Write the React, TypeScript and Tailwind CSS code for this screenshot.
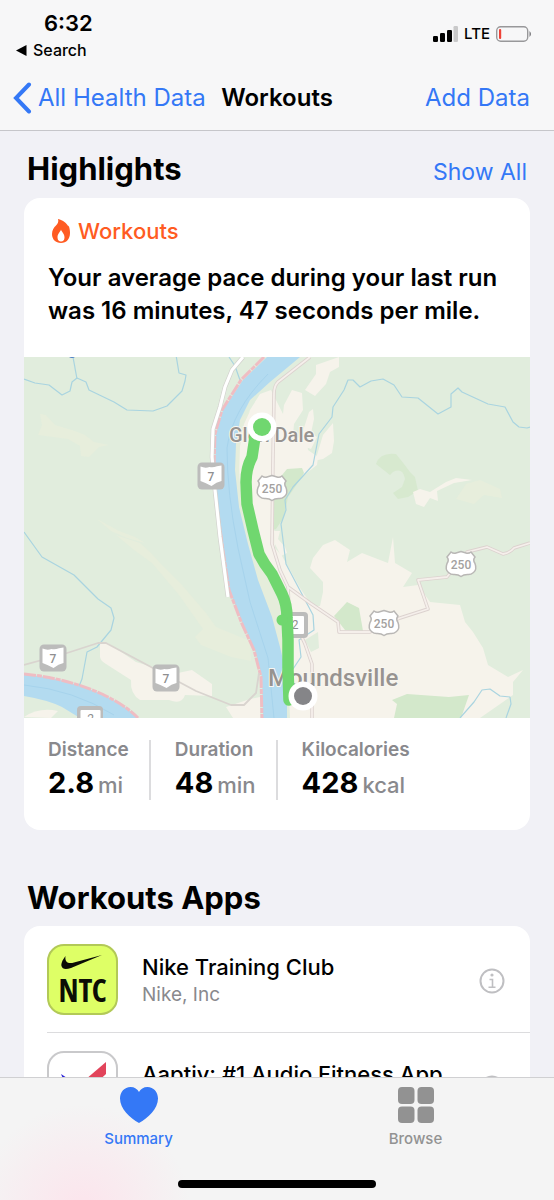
import React, { useState } from 'react';

interface Stat {
  label: string;
  value: string;
  unit: string;
}

interface WorkoutApp {
  name: string;
  vendor: string;
  icon: React.FC;
}

type TabId = 'summary' | 'browse';

const stats: Stat[] = [
  { label: 'Distance', value: '2.8', unit: 'mi' },
  { label: 'Duration', value: '48', unit: 'min' },
  { label: 'Kilocalories', value: '428', unit: 'kcal' },
];

const StatusBar: React.FC = () => (
  <div className="flex items-start justify-between pt-2 pr-[22px] pl-4">
    <div className="flex flex-col">
      <span className="pl-7 text-[22px] leading-[30px] font-semibold">6:32</span>
      <button className="flex items-center gap-1.5 text-base leading-6 font-medium">
        <svg viewBox="0 0 11 11" className="h-[11px] w-[11px]" aria-hidden="true">
          <path d="M0 5.5 10.5 0v11z" />
        </svg>
        Search
      </button>
    </div>
    <div className="flex items-center gap-1.5 pt-4">
      <svg viewBox="0 0 25 16" className="h-4 w-[25px]" aria-hidden="true">
        <rect x="0" y="10" width="5" height="6" rx="1.2" />
        <rect x="7" y="7" width="5" height="9" rx="1.2" />
        <rect x="14" y="4" width="5" height="12" rx="1.2" />
        <rect x="20.500" y="0" width="4.500" height="16" rx="1.2" fill="#c9c9ca" />
      </svg>
      <span className="text-[15px] leading-5 font-medium">LTE</span>
      <svg viewBox="0 0 36 16" className="h-4 w-9" aria-hidden="true">
        <rect x="0.700" y="0.700" width="31" height="14.600" rx="4" fill="none" stroke="#98989a" strokeWidth="1.400" />
        <rect x="3" y="3" width="2.200" height="10" rx="1" fill="#ee4237" />
        <path d="M33.500 5q3 3 0 6z" fill="#77777a" />
      </svg>
    </div>
  </div>
);

const NavBar: React.FC = () => (
  <nav className="grid grid-cols-[1fr_auto_1fr] items-center px-6 pt-[18px] pb-3.5 text-2xl leading-9">
    <button className="-ml-3 flex items-center gap-1.5 whitespace-nowrap text-[#3478f6]">
      <svg viewBox="0 0 20 32" className="h-8 w-5" fill="none" stroke="currentColor" strokeWidth="4" aria-hidden="true">
        <path d="M17 2.500 4 16l13 13.500" strokeLinecap="round" />
      </svg>
      All Health Data
    </button>
    <h1 className="font-semibold">Workouts</h1>
    <button className="justify-self-end text-[#3478f6]">Add Data</button>
  </nav>
);

const FlameIcon: React.FC = () => (
  <svg viewBox="0 0 18 24" className="h-6 w-[18px]" aria-hidden="true">
    <path
      d="M6 0c5 1 9 4.500 10.300 7.500.3-.5.2-1.200.2-1.200C17.500 8.500 18 11.500 18 14c0 6-3.500 10-9 10s-9-3.800-9-9c0-4 2-6.500 4-8.500C5.500 5 7 3 6 0z"
      fill="#ff5b22"
    />
    <path d="M9 10.500c.2 2 3.500 4 3.500 8 0 2.500-1.500 4-3.500 4s-3.500-1.500-3.500-4c0-4 3.300-6 3.500-8z" fill="#fff" />
  </svg>
);

interface ShieldProps {
  x: number;
  y: number;
  text: string;
}

// Ohio state route marker
const StateShield: React.FC<ShieldProps> = ({ x, y, text }) => (
  <g transform={`translate(${x} ${y})`}>
    <rect x="-13.500" y="-13.500" width="27" height="27" rx="4.500" fill="#bcbcbb" />
    <path d="M-10.500-9.500q4.500 2 9 .5 3.500 1 7.500-.8l4.500-.7V5q-5 1-10 5-5.500-3-11-5z" fill="#fff" />
    <text y="4.500" textAnchor="middle" fontSize="12" fontWeight="500" fill="#8f8f90">{text}</text>
  </g>
);

// US highway marker
const HighwayShield: React.FC<ShieldProps> = ({ x, y, text }) => (
  <g transform={`translate(${x} ${y})`}>
    <path
      d="M-10-12q2.500 2 5 1 2.500-.8 5-1.500 2.500.7 5 1.500 2.500 1 5-1l4 5q-2.500 3 0 6.500 2.200 6-1.500 9Q9.500 11 6.500 10.500 2.500 10.500 0 12.500q-2.500-2-6.500-2-3 .5-6-2-3.700-3-1.500-9 2.500-3.500 0-6.500z"
      fill="#fff"
      stroke="#b9b7b5"
      strokeWidth="1.500"
    />
    <text y="4.500" textAnchor="middle" fontSize="12" fontWeight="500" fill="#a3a1a0">{text}</text>
  </g>
);

const RouteMap: React.FC = () => (
  <svg viewBox="24 357 506 361" className="block h-auto w-full" fontFamily="Roboto, sans-serif" role="img" aria-label="Route of the last run">
    <rect x="24" y="357" width="506" height="361" fill="#e1eddd" />

    {/* fields and clearings */}
    <g fill="#e7eedc">
      <path d="M40 414l6 1 9 10 20 6 10 4 9 7 15 3-10 2-4 4-6 6-8-1-1-10-12-7-30-4 4-10z" />
      <path d="M97 519l22 12 16 6 10 6-18-5-16-7z" />
      <path d="M116 535l24 8q12 10 20 20l22 22 24 28 10 14 34 14 1 20-20-4-30-12-6-8 8-8-24-34-27-32-18-13z" />
      <path d="M466 484l14-4 20 9 2 9-18-3-10 9-18-5z" />
    </g>
    <path d="M376 464q4-12 20-10l8 10 6 8 5 5 3 14-10 6-10 2-5-6 9-6 3-8q-2-12-12-7l-3 3z" fill="#d7e9cf" />

    {/* built up land */}
    <g fill="#f6f3eb">
      <path d="M271 390 260 394 250 410 243 424 238 446 240 490 250 532 262 562 276 590 286 620 290 718 480 718 503 702 513 695 513 682 523 670 508 677 488 665 483 648 473 632 465 622 460 605 430 602 418 585 403 587 412 573 395 563 393 537 388 563 380 560 362 553 347 562 350 550 335 540 323 545 313 558 310 568 323 582 323 592 320 606 316 606 308 600 300 588 290 570 282 556 275 548 273 500 276 480 290 472 301 468 303 476 317 465 318 457 308 450 307 442 293 436 294 424 303 410 302 393 292 390 284 405 283 414 276 400z" />
      <path d="M316 365l23-8 0 10-9 5-4 12-11 12-10-6 11-16z" />
      <path d="M309 412l4-3 1 10-3 14 6 4-6 12-16-6 8-12z" />
      <path d="M333 423l1 18-2 12-9 6-10 2 4-6 6-20z" />
      <path d="M413 492l7-3 10 3 16-10 10-4 16 2-18 3-17 8 1 10-8-3-6 9-8-3z" />
      <path d="M100 643h8l28 19 20 6q8 12 22 5l14-3 20 14v12l-27-1q-3 10-16 5l-29 0q-10-6-9-20l-25-16q-7-4-6-9z" />
      <path d="M226 707l24-8 10-2v21h-27z" />
      <path d="M24 717q15-10 34-6l-7 7z" />
      <path d="M274 531h6l-2 8 7 8 2 6-6 3-6-12z" />
    </g>

    {/* parks */}
    <g fill="#d3e8cb">
      <path d="M273 498l5-18 9-11 15-1 2 5-9 14-7 10-4 20-8 12-3 1z" />
      <path d="M334 616l13-14 12 6 4 23-18-1z" />
      <path d="M392 700l15-6 42 3 20-2-8 23h-67l3-14z" />
    </g>
    <path d="M318 632l1 16-8 4-6-12z" fill="#e1eddd" />
    <path d="M250 411 244 424 240 446 239 478 244 510 254 544 266 574 278 600 284 620 285 650 280 650 271 618 257 580 247 544 238 507 234 470 235 444 240 420z" fill="#e5eddb" />

    {/* creeks */}
    <g fill="none" stroke="#a9d4e0" strokeWidth="1.200" strokeLinejoin="round">
      <path d="M24 379l11 4 14 2 13 10 8-4 2-9 5-4 9 4 3 8 25 12 13 8 26 1 14-5 15-15 3-10 1-6-7-2-3-18" />
      <path d="M73 357l4 22" />
      <path d="M229 357l6 9 6 17" />
      <path d="M24 532l18 25 32 18 24 24 13 9 3 10-3 12-14 17-10 5-5 27-7 17" />
      <path d="M530 427l-3 1-8-1-6-5-8-15-17-3-26-12-4-4-7 6 0 13-13 7-20-16-16-1-8-12-11-6-12 2-11 6-7-7-5 0-4 10-11 17-1 10-13 17-6 31-20 22-8 13 1 10-5 14 5 40 27 51 1 15-15 10 2 17-8 12" />
      <path d="M460 718l14-16 8-12 8-1 10 7 10 1 1 7-5 14" />
    </g>

    {/* rivers */}
    <path d="M267 357 243 380 223 410 216 434 215 467 217 500 225 557 229 590 243 624 255 650 262 677 263 718 287 718 287 677 280 647 272 617 258 580 248 544 239 507 235 470 236 444 240 420 250 400 270 382 300 357z" fill="#b3dbf0" strokeLinejoin="round" />
    <path d="M268 374q-36 36-41 74 0 45 11 100l12 54 18 56 6 60" fill="none" stroke="#a6d3ec" />
    <path d="M24 674q42 4 78 20 25 12 36 24H80L62 707Q48 700 24 696z" fill="#b3dbf0" />
    <path d="M24 685q50 5 90 30" fill="none" stroke="#a6d3ec" />
    <g fill="none" stroke="#efbdc3" strokeWidth="3" strokeDasharray="12 1 5 1">
      <path d="M264 357 241 380 222 410 215 434 214 467 216 500 224 557 229 590 242 624 254 650 261 677 262 718" />
      <path d="M24 674q42 4 78 20 25 12 36 24" />
    </g>

    {/* roads */}
    <g fill="none" strokeLinejoin="round">
      <path d="M243 357 232 370 225 387 220 407 213 429 212 457 215 490 220 537 228 597" stroke="#d2d1cd" strokeWidth="4.500" />
      <path d="M243 357 232 370 225 387 220 407 213 429 212 457 215 490 220 537 228 597" stroke="#fff" strokeWidth="3.200" />
      <path d="M24 665l40-11 34-11 8 0 30 16 30 16 30 16 35 14h13l12-12 3-20" stroke="#d9d4cf" strokeWidth="1.800" />
      <g stroke="#dcd2cf" strokeWidth="3.500">
        <path d="M310 357 278 382Q274 386 274 394L273 457 272 544 280 570 288 587 310 603 338 622 339 632 370 632 400 618 428 609 418 580 447 577 467 552 487 547 503 554Q510 553 514 548L530 543" />
        <path d="M288 587l1 22 16 35 7 20v54" />
      </g>
      <g stroke="#f5efeb" strokeWidth="1.800">
        <path d="M310 357 278 382Q274 386 274 394L273 457 272 544 280 570 288 587 310 603 338 622 339 632 370 632 400 618 428 609 418 580 447 577 467 552 487 547 503 554Q510 553 514 548L530 543" />
        <path d="M288 587l1 22 16 35 7 20v54" />
      </g>
    </g>

    <StateShield x={211} y={476} text="7" />
    <StateShield x={53} y={658} text="7" />
    <StateShield x={166} y={678} text="7" />
    <g>
      <rect x="77" y="706" width="26" height="24" rx="4" fill="#bcbcbb" />
      <rect x="80.500" y="710" width="20" height="18" rx="1" fill="#fff" />
      <text x="90.500" y="723" textAnchor="middle" fontSize="12" fill="#8f8f90">2</text>
    </g>
    <HighwayShield x={272} y={488} text="250" />
    <HighwayShield x={384} y={623} text="250" />
    <HighwayShield x={461} y={564} text="250" />
    <g>
      <rect x="282" y="612" width="26" height="26" rx="4" fill="#bcbcbb" />
      <rect x="286" y="616" width="18" height="18" rx="1" fill="#fff" />
      <text x="295" y="629" textAnchor="middle" fontSize="12" fill="#8f8f90">2</text>
    </g>

    <g fill="#979390" stroke="#f8f6f0" strokeWidth="2" paintOrder="stroke" fontWeight="500">
      <text x="229" y="442" fontSize="20">Glen Dale</text>
      <text x="268" y="686" fontSize="24">Moundsville</text>
    </g>

    {/* recorded route */}
    <path
      d="M255 437 252 457Q246 468 246 482L247 504 253 530 259 554Q264 564 272 574L282 594Q287 604 287 618L288 640 288 670 289 700"
      fill="none"
      stroke="#70d76f"
      strokeWidth="11.500"
      strokeLinecap="round"
      strokeLinejoin="round"
    />
    <circle cx="282" cy="620" r="5.500" fill="#70d76f" />
    <circle cx="262" cy="427" r="14.500" fill="#fff" />
    <circle cx="262" cy="427" r="9" fill="#70d76f" />
    <circle cx="303" cy="696" r="14.500" fill="#fff" />
    <circle cx="303" cy="696" r="9" fill="#858588" />
    <path d="M69 357h6q-3 2-6 0z" fill="#4f7fc4" />
  </svg>
);

const NikeIcon: React.FC = () => (
  <svg viewBox="0 0 71 71" className="h-[71px] w-[71px]" role="img" aria-label="Nike Training Club icon">
    <rect x="1" y="1" width="69" height="69" rx="16" fill="#deff66" stroke="#b2c957" strokeWidth="2" />
    <path d="M18.500 12c-3.500 4.500-4.500 8-4 10 .8 3.500 4.500 3.500 9.500 2L55 11 27 18.500c-5 1.300-9.500.5-8.500-6.500z" fill="#0b0d05" />
    <text x="35.500" y="58" textAnchor="middle" fill="#0b0d05" fontSize="32" fontWeight="700" className="font-['Liberation_Sans_Narrow','Open_Sans_Condensed','DejaVu_Sans_Condensed']">
      NTC
    </text>
  </svg>
);

const AaptivIcon: React.FC = () => (
  <svg viewBox="0 0 71 71" className="h-[71px] w-[71px]" role="img" aria-label="Aaptiv icon">
    <rect x="1" y="1" width="69" height="69" rx="16" fill="#fff" stroke="#c9c9cb" strokeWidth="2" />
    <path d="M14 23l18 12-8 12z" fill="#2b22d8" />
    <path d="M59 11v12L32 48l-7-8z" fill="#e2445b" />
  </svg>
);

const apps: WorkoutApp[] = [
  { name: 'Nike Training Club', vendor: 'Nike, Inc', icon: NikeIcon },
  { name: 'Aaptiv: #1 Audio Fitness App', vendor: 'Aaptiv Inc.', icon: AaptivIcon },
];

const InfoIcon: React.FC = () => (
  <svg viewBox="0 0 26 26" className="h-[26px] w-[26px]" fill="none" stroke="#bfbfc2" strokeWidth="2" aria-hidden="true">
    <circle cx="13" cy="13" r="11.500" />
    <circle cx="13" cy="7" r="1.600" fill="#bfbfc2" stroke="none" />
    <path d="M10.500 11.500h3V19M9.500 19.300h7" strokeWidth="1.600" />
  </svg>
);

const HighlightCard: React.FC = () => (
  <article className="overflow-hidden rounded-2xl bg-white">
    <div className="px-6 pt-[17px] pb-[30px]">
      <div className="flex items-center gap-2 pl-1 text-[#ff5b22]">
        <FlameIcon />
        <h3 className="text-[22px] leading-8 font-medium">Workouts</h3>
      </div>
      <p className="pt-3.5 text-2xl leading-[33px] font-semibold">
        Your average pace during your last run was 16 minutes, 47 seconds per mile.
      </p>
    </div>
    <RouteMap />
    <dl className="flex px-6 pt-[22px] pb-[30px]">
      {stats.map((stat, index) => (
        <div key={stat.label} className={`h-[60px] ${index > 0 ? 'border-l-2 border-[#dcdcde] pl-6' : ''} ${index < stats.length - 1 ? 'pr-5' : ''}`}>
          <dt className="text-[19px] leading-5 font-semibold text-[#89898d]">{stat.label}</dt>
          <dd className="flex items-baseline gap-1 pt-[5px] text-[29px] leading-9 font-bold">
            {stat.value}
            <span className="text-[22px] font-medium text-[#89898d]">{stat.unit}</span>
          </dd>
        </div>
      ))}
    </dl>
  </article>
);

const AppRow: React.FC<{ app: WorkoutApp }> = ({ app }) => {
  const Icon = app.icon;
  return (
    <li className="flex items-start border-t border-[#dcdcde] pt-[18px] pb-[17px] first:border-t-0">
      <Icon />
      <div className="flex-1 pt-[7px] pl-6">
        <p className="text-[22px] leading-8 font-medium">{app.name}</p>
        <p className="text-[19px] leading-6 text-[#89898d]">{app.vendor}</p>
      </div>
      <button className="mt-6 mr-[25px]" aria-label={`About ${app.name}`}>
        <InfoIcon />
      </button>
    </li>
  );
};

const TabBar: React.FC = () => {
  const [active, setActive] = useState<TabId>('summary');

  return (
    <footer className="border-t border-[#d0d0d2] bg-[#f4f4f4] bg-[radial-gradient(circle_at_15%_110%,#fce4ec_0,#f4f4f400_22%)] pt-[9px] pb-3">
      <div className="grid grid-cols-2 pb-[31px]">
        <button
          onClick={() => setActive('summary')}
          className={`flex flex-col items-center gap-1.5 text-[15px] leading-5 font-medium ${active === 'summary' ? 'text-[#3478f6]' : 'text-[#929292]'}`}
        >
          <svg viewBox="0 0 38 36" className="h-9 w-[38px]" fill="currentColor" aria-hidden="true">
            <path d="M19 36C10 31 0 22 0 11.500 0 5 4.500 0 10.500 0 14.500 0 17.500 2 19 5c1.500-3 4.500-5 8.500-5C33.500 0 38 5 38 11.500 38 22 28 31 19 36z" />
          </svg>
          Summary
        </button>
        <button
          onClick={() => setActive('browse')}
          className={`flex flex-col items-center gap-1.5 text-[15px] leading-5 font-medium ${active === 'browse' ? 'text-[#3478f6]' : 'text-[#929292]'}`}
        >
          <svg viewBox="0 0 36 36" className="h-9 w-9" fill="currentColor" aria-hidden="true">
            <rect width="16.500" height="17" rx="4" />
            <rect x="19.500" width="16.500" height="17" rx="4" />
            <rect y="19.500" width="16.500" height="16.500" rx="4" />
            <rect x="19.500" y="19.500" width="16.500" height="16.500" rx="4" />
          </svg>
          Browse
        </button>
      </div>
      <div className="mx-auto h-2 w-[198px] rounded-full bg-black" />
    </footer>
  );
};

const App: React.FC = () => (
  <div className="flex h-screen flex-col bg-[#f1f1f6] font-[Inter,sans-serif] text-black">
    <header className="border-b border-[#c6c6ca] bg-[#f7f7f8]">
      <StatusBar />
      <NavBar />
    </header>
    <main className="min-h-0 flex-1 overflow-y-auto px-6 [scrollbar-width:none]">
      <section>
        <div className="flex items-baseline justify-between px-[3px] pt-[18px] pb-2">
          <h2 className="text-[31px] leading-10 font-bold">Highlights</h2>
          <button className="text-[23px] leading-9 text-[#3478f6]">Show All</button>
        </div>
        <HighlightCard />
      </section>
      <section>
        <h2 className="px-[3px] pt-12 pb-2 text-[31px] leading-10 font-bold">Workouts Apps</h2>
        <ul className="rounded-2xl bg-white pl-[23px]">
          {apps.map(app => (
            <AppRow key={app.name} app={app} />
          ))}
        </ul>
      </section>
    </main>
    <TabBar />
  </div>
);

export default App;
